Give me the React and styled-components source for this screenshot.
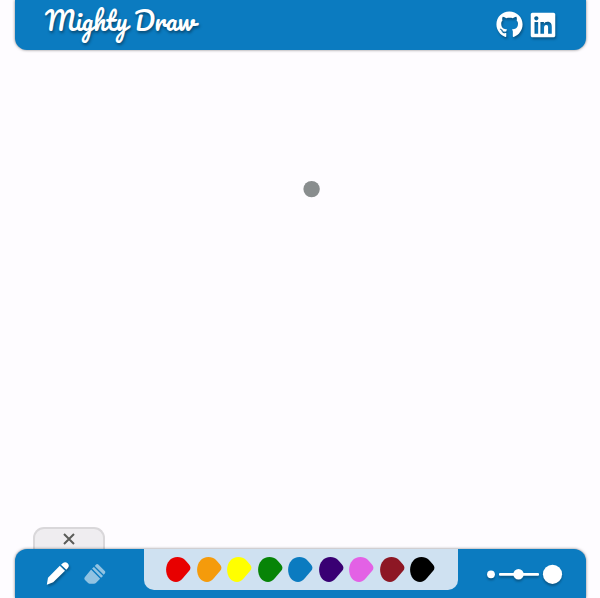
import React from "react";
import styled, { createGlobalStyle } from "styled-components";
import { FaGithub, FaLinkedin } from "react-icons/fa";

const GlobalStyle = createGlobalStyle`
  * { box-sizing: border-box; }
  body { margin: 0; background: #fefcff; overflow: hidden; }
`;

const Page = styled.div`
  display: flex;
  flex-direction: column;
  height: 598px;
  padding: 0 14px 0 15px;
`;

const Header = styled.header`
  display: flex;
  justify-content: space-between;
  height: 50px;
  padding: 0 29.5px 0 30px;
  background: #0b7bc0;
  border-radius: 0 0 12px 12px;
  box-shadow: 0 0 3px rgba(0, 0, 0, 0.5);
`;

const Logo = styled.h1`
  margin: 0;
  color: #fff;
  font: 400 25px/41px Pacifico, "Lato", cursive;
  letter-spacing: -0.12px;
  white-space: nowrap;
  text-shadow: 1px 2px 3px rgba(0, 0, 0, 0.4);
`;

const Links = styled.nav`
  display: flex;
  gap: 6px;
  padding-top: 11px;
`;

const IconLink = styled.a`
  display: flex;
  height: 28px;
  color: #fff;
  filter: drop-shadow(1px 2px 1px rgba(0, 0, 0, 0.3));
  svg { width: ${(p) => p.$width}px; height: ${(p) => p.$height}px; }
`;

const Canvas = styled.main`
  position: relative;
  flex: 1;
`;

const Cursor = styled.svg`
  position: absolute;
  left: 288px;
  top: 130px;
  width: 17px;
  height: 18px;
  fill: #898d8e;
`;

const CloseTab = styled.button`
  display: flex;
  align-items: center;
  justify-content: center;
  width: 72px;
  height: 22px;
  margin-left: 18px;
  padding: 0;
  border: 2px solid #d9d7da;
  border-bottom: 0;
  border-radius: 11px 11px 0 0;
  background: #efedf0;
`;

const Toolbar = styled.footer`
  position: relative;
  display: flex;
  height: 49px;
  background: #0b7bc0;
  border-radius: 12px 12px 0 0;
  box-shadow: 0 0 3px rgba(0, 0, 0, 0.5);
`;

const Tools = styled.div`
  display: flex;
  width: 129px;
  padding: 11px 0 0 30px;
  gap: 12px;
`;

const ToolIcon = styled.svg`
  width: 26px;
  height: 28px;
  overflow: visible;
  opacity: ${(p) => (p.$active ? 1 : 0.55)};
  filter: ${(p) => (p.$active ? "drop-shadow(1px 2px 1px rgba(0,0,0,.3))" : "none")};
`;

const Palette = styled.div`
  display: flex;
  width: 313.5px;
  height: 40.5px;
  padding: 7.5px 0 0 22px;
  gap: 6.15px;
  background: #cfe1f1;
  border-radius: 0 0 10px 10px;
`;

const Swatch = styled.svg`
  flex: none;
  width: 24.4px;
  height: 25px;
  overflow: visible;
  fill: ${(p) => p.$color};
`;

const SizePicker = styled.svg`
  width: 90px;
  height: 40px;
  margin-left: 22.5px;
  fill: #fff;
  filter: drop-shadow(0 2px 1px rgba(0, 0, 0, 0.3));
`;

const colors = ["#e80000", "#f59b0b", "#ffff00", "#078407", "#0b7bc0", "#390073", "#e361e5", "#8d1724", "#000"];

export default function App() {
  return (
    <>
      <GlobalStyle />
      <Page>
        <Header>
          <Logo>Mighty Draw</Logo>
          <Links>
            <IconLink aria-label="GitHub" $width={27} $height={27}><FaGithub /></IconLink>
            <IconLink aria-label="LinkedIn" $width={28} $height={28}><FaLinkedin /></IconLink>
          </Links>
        </Header>
        <Canvas>
          <Cursor viewBox="0 0 17 18"><circle cx="8.6" cy="9.1" r="8.2" /></Cursor>
        </Canvas>
        <CloseTab aria-label="Close">
          <svg width="12" height="12" viewBox="0 0 12 12">
            <path d="M1 1 11 11M11 1 1 11" stroke="#5b5c59" strokeWidth="2" />
          </svg>
        </CloseTab>
        <Toolbar>
          <Tools>
            <ToolIcon $active viewBox="0 0 26 28">
              <path fill="#fff" d="M1.8 24.8 3 17.7 14.8 5.8 20 10.8 8.2 22.3ZM16 4.8 18 3.1Q20.2 1.2 22.6 3.3 24.9 5.7 22.9 8.1L21.3 9.8Z" />
            </ToolIcon>
            <ToolIcon viewBox="0 0 26 28">
              <g fill="#fff">
                <path d="M8.1 9.4 17.1 18.7 12.9 23.1Q12.1 23.8 11 23.8H6.7Q5.8 23.8 5.1 23L2 20Q.7 18.6 2 17.1Z" />
                <path d="M9.1 8.5 10.9 6.9 20 15.9 18.1 17.8Z" />
                <path d="M11.8 5.9 13.1 4.5Q14.2 3.5 15.3 4.6L21.8 11.1Q22.8 12.2 21.8 13.4L20.7 14.8Z" />
              </g>
            </ToolIcon>
          </Tools>
          <Palette>
            {colors.map((c) => (
              <Swatch key={c} $color={c} viewBox="0 0 24.4 25">
                <path d="M.1 12.8C.1 5.5 4.7 0 11.5 0C14.5 0 16.7 .8 18.8 2.8L22.8 7.2C24.9 9.6 25 11.7 23 14.1L16.8 21.3C14.5 23.9 12.7 25 10 25C4.3 25 .1 19.8 .1 12.8Z" />
              </Swatch>
            ))}
          </Palette>
          <SizePicker viewBox="0 0 90 40">
            <circle cx="11" cy="25.3" r="3.9" />
            <rect x="19" y="24" width="40" height="2.7" rx="1" />
            <circle cx="38.5" cy="25.3" r="5.2" />
            <circle cx="72.5" cy="25.3" r="9.6" />
          </SizePicker>
        </Toolbar>
      </Page>
    </>
  );
}
